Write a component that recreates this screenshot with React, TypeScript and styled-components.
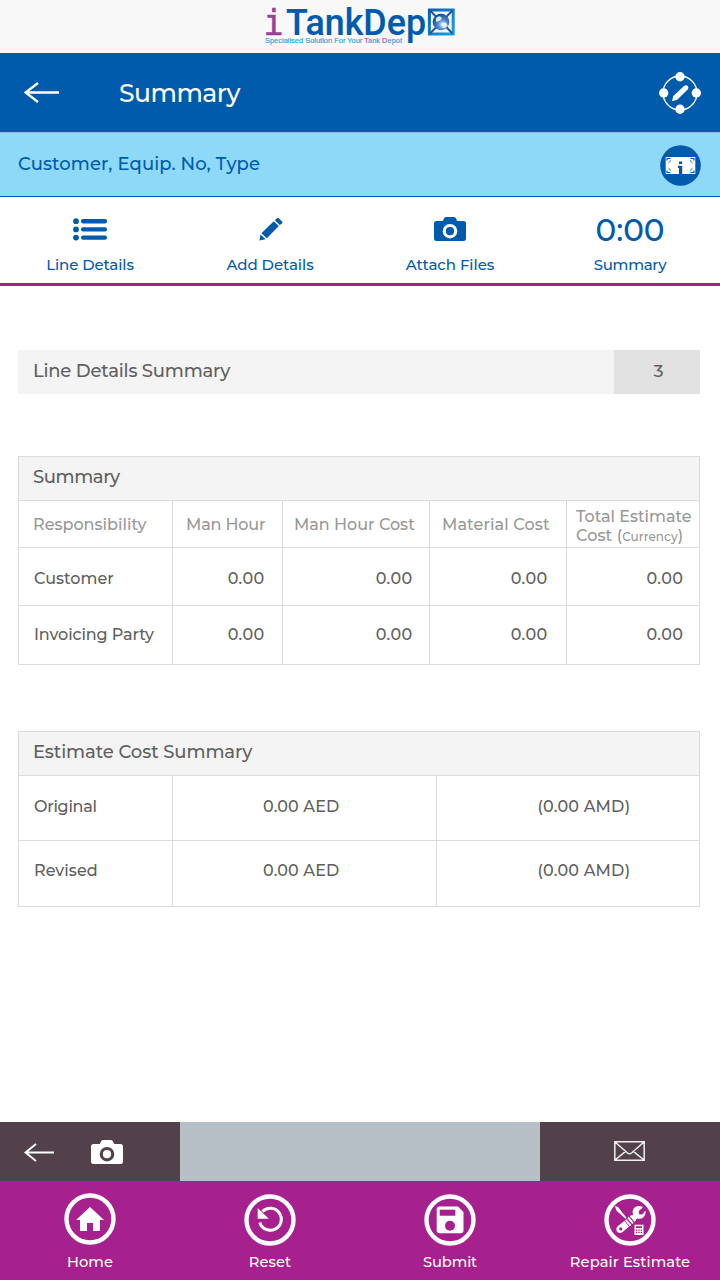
import React from "react";
import styled, { createGlobalStyle } from "styled-components";

const blue = "#005bac";
const purple = "#a6218d";
const line = "#dcdcdc";

const GlobalStyle = createGlobalStyle`
  * { box-sizing: border-box; }
  body {
    margin: 0;
    background: #fff;
    font-family: Montserrat, Inter, "Open Sans", sans-serif;
    font-weight: 500;
  }
  svg { display: block; flex: none; }
`;

const Screen = styled.div`
  width: 720px;
  height: 1280px;
  display: flex;
  flex-direction: column;
  background: #fff;
  overflow: hidden;
`;

const Label = styled.span<{ $size: number; $track?: number }>`
  font-size: ${(p) => p.$size}px;
  letter-spacing: ${(p) => p.$track ?? 0}px;
  line-height: 20px;
  white-space: nowrap;
`;

const LogoBar = styled.div`
  height: 53px;
  flex: none;
  display: flex;
  justify-content: center;
  background: #f8f8f8;
`;

const TitleBar = styled.header`
  height: 80px;
  flex: none;
  display: flex;
  align-items: center;
  padding: 0 19px 0 24px;
  background: ${blue};
  border-bottom: 1px solid #8fb8de;
  color: #fff;
`;

const Title = styled.h1`
  flex: 1;
  margin: 1px 0 0 60px;
  font-size: 25px;
  font-weight: 500;
  letter-spacing: -0.5px;
  line-height: 30px;
`;

const CustomerBar = styled.div`
  height: 64px;
  flex: none;
  display: flex;
  justify-content: space-between;
  padding: 12px 19px 0 18px;
  background: #8ed8f8;
  border-bottom: 1px solid ${blue};
  color: ${blue};
`;

const CustomerText = styled.div`
  padding-top: 9px;
  line-height: 20px;
`;

const Tabs = styled.nav`
  height: 89px;
  flex: none;
  display: grid;
  grid-template-columns: repeat(4, 180px);
  border-bottom: 3px solid ${purple};
  color: ${blue};
`;

const Tab = styled.div`
  display: flex;
  flex-direction: column;
  align-items: center;
  padding-top: 14px;
`;

const TabIcon = styled.div<{ $left?: number; $top?: number }>`
  height: 36px;
  margin-bottom: 8px;
  padding: ${(p) => p.$top ?? 0}px 0 0 ${(p) => p.$left ?? 0}px;
  display: flex;
  align-items: center;
`;

const Content = styled.main`
  flex: 1;
  padding: 64px 20px 0 18px;
  color: #606060;
`;

const LineSummary = styled.div`
  height: 44px;
  display: flex;
  background: #f4f4f4;
`;

const LineTitle = styled.div`
  flex: 1;
  padding: 11px 0 0 15px;
  line-height: 20px;
`;

const Count = styled.div`
  width: 86px;
  padding: 11px 0 0 3px;
  line-height: 20px;
  text-align: center;
  background: #e2e2e2;
`;

const Table = styled.section<{ $columns: string; $rows: string; $top: number }>`
  margin-top: ${(p) => p.$top}px;
  display: grid;
  grid-template-columns: ${(p) => p.$columns};
  grid-template-rows: ${(p) => p.$rows};
  border: solid ${line};
  border-width: 1px 0 0 1px;
`;

const TableTitle = styled.div`
  grid-column: 1 / -1;
  padding: 10px 0 0 14px;
  line-height: 20px;
  background: #f4f4f4;
  border: solid ${line};
  border-width: 0 1px 1px 0;
`;

const Cell = styled.div<{ $pad: string; $align?: string; $muted?: boolean }>`
  padding: ${(p) => p.$pad};
  line-height: 20px;
  text-align: ${(p) => p.$align ?? "left"};
  color: ${(p) => (p.$muted ? "#989898" : "inherit")};
  border: solid ${line};
  border-width: 0 1px 1px 0;
`;

const TwoLine = styled.div`
  display: flex;
  flex-direction: column;
  & > span { line-height: 19px; }
`;

const ToolStrip = styled.div`
  height: 59px;
  flex: none;
  display: grid;
  grid-template-columns: 180px 360px 180px;
`;

const ToolPane = styled.div<{ $light?: boolean; $center?: boolean }>`
  display: flex;
  align-items: center;
  justify-content: ${(p) => (p.$center ? "center" : "flex-start")};
  gap: 37px;
  padding: ${(p) => (p.$center ? "0 2px 1px 0" : "1px 0 0 24px")};
  background: ${(p) => (p.$light ? "#b7bfc6" : "#52414b")};
`;

const Footer = styled.footer`
  height: 99px;
  flex: none;
  display: grid;
  grid-template-columns: repeat(4, 180px);
  background: ${purple};
  color: #fff;
`;

const FooterItem = styled.div<{ $top: number }>`
  display: flex;
  flex-direction: column;
  align-items: center;
  justify-content: space-between;
  padding: ${(p) => p.$top}px 0 8px;
`;

const Logo = () => (
  <svg width="192" height="53" viewBox="264 0 192 53">
    <defs>
      <linearGradient id="frame" x1="0" y1="0" x2="1" y2="1">
        <stop offset="0" stopColor="#0a5fae" />
        <stop offset="1" stopColor="#1fa0e0" />
      </linearGradient>
      <radialGradient id="globe" cx="0.6" cy="0.65" r="0.65">
        <stop offset="0" stopColor="#e6f2fb" />
        <stop offset="0.45" stopColor="#4f8aca" />
        <stop offset="1" stopColor="#17478f" />
      </radialGradient>
    </defs>
    <text x="263.500" y="35" fontFamily="DejaVu Sans Mono" fontSize="35" fill="#9c3f98" stroke="#9c3f98" strokeWidth="0.6" textLength="20" lengthAdjust="spacingAndGlyphs">i</text>
    <text x="286" y="35" fontFamily="Roboto" fontSize="37" fill={blue} stroke={blue} strokeWidth="0.15" textLength="140" lengthAdjust="spacingAndGlyphs">TankDep</text>
    <text x="265" y="43" fontFamily="Liberation Sans" fontSize="7.600" fill="#26a3dc" stroke="#26a3dc" strokeWidth="0.150" textLength="137" lengthAdjust="spacingAndGlyphs">
      Specialised Solution For Your <tspan fill="#b0449f" stroke="#b0449f">T</tspan>ank <tspan fill="#b0449f" stroke="#b0449f">D</tspan>epot
    </text>
    <rect x="429.400" y="10" width="23.800" height="24" fill="#eaf5fc" stroke="url(#frame)" strokeWidth="3" />
    <path d="M430 10.500L452.500 33.500M452.500 10.500L430 33.500" stroke="#26509a" strokeWidth="1.800" />
    <circle cx="441" cy="22" r="8.300" fill="url(#globe)" />
    <path d="M436 18q3-3 5-1t-2 4-3-1zM441 24q4-3 6 0t-4 4z" fill="#f5fbff" opacity="0.850" />
  </svg>
);

const BackArrow = ({ w, h, stroke }: { w: number; h: number; stroke: number }) => (
  <svg width={w} height={h} viewBox={`0 0 ${w} ${h}`} fill="none" stroke="#fff" strokeWidth={stroke}>
    <path d={`M1 ${h / 2}H${w}M${w * 0.4} 1L1.500 ${h / 2}L${w * 0.4} ${h - 1}`} />
  </svg>
);

const EditNodes = () => (
  <svg width="42" height="42" viewBox="0 0 42 42" fill="#fff">
    <circle cx="21" cy="21" r="17" fill="none" stroke="#fff" strokeWidth="1.300" />
    <circle cx="21" cy="4.700" r="4.700" />
    <circle cx="4.700" cy="21" r="4.700" />
    <circle cx="37.300" cy="21" r="4.700" />
    <circle cx="21" cy="37.300" r="4.700" />
    <path d="M13 29.200l1.300-5.200L25.300 13.800q2-1.400 3.500.2t-.1 3.500L18.200 27.700z" />
  </svg>
);

const InfoBadge = () => (
  <svg width="41" height="41" viewBox="0 0 41 41">
    <circle cx="20.500" cy="20.500" r="20.300" fill={blue} />
    <rect x="5.700" y="12" width="29.600" height="17" fill="#fff" />
    <g fill="none" stroke={blue} strokeWidth="1.200">
      <path d="M7 15.500v-2h3.500M30.500 13.500H34v2M7 25.500v2h3.500M30.500 27.500H34v-2" />
      <path d="M8.300 18q1.800-.8 2.300-2.800M32.700 18q-1.800-.8-2.300-2.800M8.300 23q1.800.8 2.300 2.800M32.700 23q-1.800.8-2.300 2.800" strokeWidth="0.800" />
    </g>
    <path d="M19 16.600h3.200v2.500H19zM18 20.700h4.200v8.400H19v-6.200h-1z" fill={blue} />
  </svg>
);

const ListIcon = () => (
  <svg width="34" height="23" viewBox="0 0 34 23" fill={blue}>
    {[3.2, 11.4, 19.6].map((y) => (
      <g key={y}>
        <circle cx="3" cy={y} r="2.900" />
        <rect x="8" y={y - 2.2} width="26" height="4.400" rx="2" />
      </g>
    ))}
  </svg>
);

const PencilIcon = () => (
  <svg width="24" height="24" viewBox="0 0 24 24" fill={blue}>
    <path d="M.500 23.500L1.500 17.500 6.500 22.300zM2.400 16.200L14.800 4.200l5 4.700L7.800 21.200zM15.800 3.200L18 1.200q.9-.8 1.800 0l3.300 3.300q.8.900 0 1.700L20.900 8.100z" />
  </svg>
);

const CameraIcon = ({ color, hole }: { color: string; hole: string }) => (
  <svg width="32" height="24" viewBox="0 0 32 24">
    <path d="M2.500 4H8.500Q9.300 3.700 9.500 2.500 10 0 12 0h8q2 0 2.500 2.500Q22.700 3.700 23.500 4h6Q32 4 32 6.500v15Q32 24 29.500 24h-27Q0 24 0 21.500v-15Q0 4 2.500 4z" fill={color} />
    <circle cx="16" cy="14.200" r="5.700" fill={color} stroke={hole} strokeWidth="3.200" />
  </svg>
);

const Envelope = () => (
  <svg width="31" height="20" viewBox="0 0 31 20" fill="none" stroke="#f1edf0" strokeWidth="1.500">
    <path d="M.8.8h29.400v18.400H.8zM1 1l12.500 11q2 1.600 4 0L30 1M1 19L11.600 10.300M30 19L19.400 10.300" />
  </svg>
);

const Ring = ({ children }: { children: React.ReactNode }) => (
  <svg width="52" height="52" viewBox="0 0 52 52" fill="#fff">
    <circle cx="26" cy="26" r="23.500" fill="none" stroke="#fff" strokeWidth="4.400" />
    {children}
  </svg>
);

const HomeGlyph = () => (
  <path d="M26 14L40 27H36v11H29V30H23v8H16V27H12z" />
);

const ResetGlyph = () => (
  <>
    <path d="M18.500 17.500A11 11 0 1 1 15.800 28.500" fill="none" stroke="#fff" strokeWidth="3" />
    <path d="M13.700 14V24.700H24.800z" />
  </>
);

const SaveGlyph = () => (
  <>
    <path d="M15.500 12.500H34L39.500 18V36.500Q39.500 39.300 36.800 39.300H15.500Q12.700 39.300 12.700 36.500V15.300Q12.700 12.500 15.500 12.500z" />
    <rect x="15.700" y="15.700" width="15.600" height="6" fill={purple} />
    <circle cx="26" cy="31.700" r="5" fill={purple} />
  </>
);

const RepairGlyph = () => (
  <>
    <path d="M11 12l3 1 5 6.500 3.500 4-1.200 1.200-4-3.700-5-4.600z" />
    <path d="M38 12.600Q39.200 12.800 38.500 13.700L34.800 17 35 20.300 38.200 20.500 40.900 17.300Q41.700 16.700 41.700 18 41.300 22.500 38 24.200 35.500 25.200 33.200 24.500L30.500 26.600 27.300 23.200 29 20.200Q27.600 16 31 13.200 34.200 11.300 38 12.600z" />
    <path d="M24 23.500L29 29.300M21.600 25.800L26.600 31.600M26.500 21.700L31.300 27.200" stroke="#fff" strokeWidth="2" />
    <path d="M20.300 27L25 32.400 18.700 37.900Q15.500 40.200 13 37.400 11.300 34.500 14 32.100z" />
    <circle cx="16.700" cy="34.900" r="1.600" fill={purple} />
    <rect x="30.500" y="30.700" width="9" height="10.300" />
    <path d="M32 32.300h6v1.700h-6zM32 35.500h1.400v1.200H32zM34.300 35.500h1.400v1.200h-1.400zM36.600 35.500H38v1.200h-1.400zM32 37.800h1.400V39H32zM34.300 37.800h1.400V39h-1.400zM36.600 37.800H38V39h-1.400z" fill={purple} />
  </>
);

const headings = [
  { text: "Responsibility", pad: "14px 0 0 14px", track: 0.02 },
  { text: "Man Hour", pad: "14px 0 0 13px", track: -0.15 },
  { text: "Man Hour Cost", pad: "14px 0 0 11px", track: 0 },
  { text: "Material Cost", pad: "14px 0 0 12px", track: 0.12 },
];

const parties = [
  { name: "Customer", top: 21, track: 0 },
  { name: "Invoicing Party", top: 19, track: -0.1 },
];

const insets = [17.3, 16.3, 18.3, 15.5];

const estimates = [
  { name: "Original", top: 21, track: -0.25 },
  { name: "Revised", top: 20, track: 0.05 },
];

const actions = [
  { name: "Home", track: 0, top: 12, glyph: <HomeGlyph /> },
  { name: "Reset", track: 0.1, top: 13, glyph: <ResetGlyph /> },
  { name: "Submit", track: -0.1, top: 13, glyph: <SaveGlyph /> },
  { name: "Repair Estimate", track: 0.1, top: 13, glyph: <RepairGlyph /> },
];

export default function App() {
  return (
    <Screen>
      <GlobalStyle />
      <LogoBar>
        <Logo />
      </LogoBar>
      <TitleBar>
        <BackArrow w={35} h={21} stroke={2.3} />
        <Title>Summary</Title>
        <EditNodes />
      </TitleBar>
      <CustomerBar>
        <CustomerText>
          <Label $size={18} $track={0.1}>Customer, Equip. No, Type</Label>
        </CustomerText>
        <InfoBadge />
      </CustomerBar>
      <Tabs>
        <Tab>
          <TabIcon><ListIcon /></TabIcon>
          <Label $size={15} $track={-0.1}>Line Details</Label>
        </Tab>
        <Tab>
          <TabIcon $left={2}><PencilIcon /></TabIcon>
          <Label $size={15} $track={-0.05}>Add Details</Label>
        </Tab>
        <Tab>
          <TabIcon><CameraIcon color={blue} hole="#fff" /></TabIcon>
          <Label $size={15} $track={-0.05}>Attach Files</Label>
        </Tab>
        <Tab>
          <TabIcon $top={2}><Label $size={31}>0:00</Label></TabIcon>
          <Label $size={15} $track={-0.3}>Summary</Label>
        </Tab>
      </Tabs>
      <Content>
        <LineSummary>
          <LineTitle><Label $size={18} $track={-0.2}>Line Details Summary</Label></LineTitle>
          <Count><Label $size={17.5}>3</Label></Count>
        </LineSummary>

        <Table $top={62} $columns="154px 110px 147px 137px 133px" $rows="44px 47px 58px 59px">
          <TableTitle><Label $size={18} $track={-0.4}>Summary</Label></TableTitle>
          {headings.map((h) => (
            <Cell key={h.text} $muted $pad={h.pad}>
              <Label $size={16} $track={h.track}>{h.text}</Label>
            </Cell>
          ))}
          <Cell $muted $pad="6px 0 0 9px">
            <TwoLine>
              <Label $size={16}>Total Estimate</Label>
              <Label $size={16} $track={0.1}>
                Cost (<Label $size={12} $track={0.05}>Currency</Label>)
              </Label>
            </TwoLine>
          </Cell>
          {parties.map((p) => (
            <React.Fragment key={p.name}>
              <Cell $pad={`${p.top}px 0 0 15px`}>
                <Label $size={16} $track={p.track}>{p.name}</Label>
              </Cell>
              {insets.map((right, i) => (
                <Cell key={i} $align="right" $pad={`${p.top}px ${right}px 0 0`}>
                  <Label $size={16} $track={0.45}>0.00</Label>
                </Cell>
              ))}
            </React.Fragment>
          ))}
        </Table>

        <Table $top={66} $columns="154px 264px 263px" $rows="44px 65px 66px">
          <TableTitle><Label $size={18} $track={-0.08}>Estimate Cost Summary</Label></TableTitle>
          {estimates.map((e) => (
            <React.Fragment key={e.name}>
              <Cell $pad={`${e.top}px 0 0 15px`}><Label $size={16} $track={e.track}>{e.name}</Label></Cell>
              <Cell $pad={`${e.top}px 0 0 90px`}><Label $size={16} $track={0.15}>0.00 AED</Label></Cell>
              <Cell $pad={`${e.top}px 0 0 100.5px`}><Label $size={16} $track={0.2}>(0.00 AMD)</Label></Cell>
            </React.Fragment>
          ))}
        </Table>
      </Content>
      <ToolStrip>
        <ToolPane>
          <BackArrow w={30} h={19} stroke={1.9} />
          <CameraIcon color="#fff" hole="#52414b" />
        </ToolPane>
        <ToolPane $light />
        <ToolPane $center><Envelope /></ToolPane>
      </ToolStrip>
      <Footer>
        {actions.map((a) => (
          <FooterItem key={a.name} $top={a.top}>
            <Ring>{a.glyph}</Ring>
            <Label $size={14.7} $track={a.track}>{a.name}</Label>
          </FooterItem>
        ))}
      </Footer>
    </Screen>
  );
}
